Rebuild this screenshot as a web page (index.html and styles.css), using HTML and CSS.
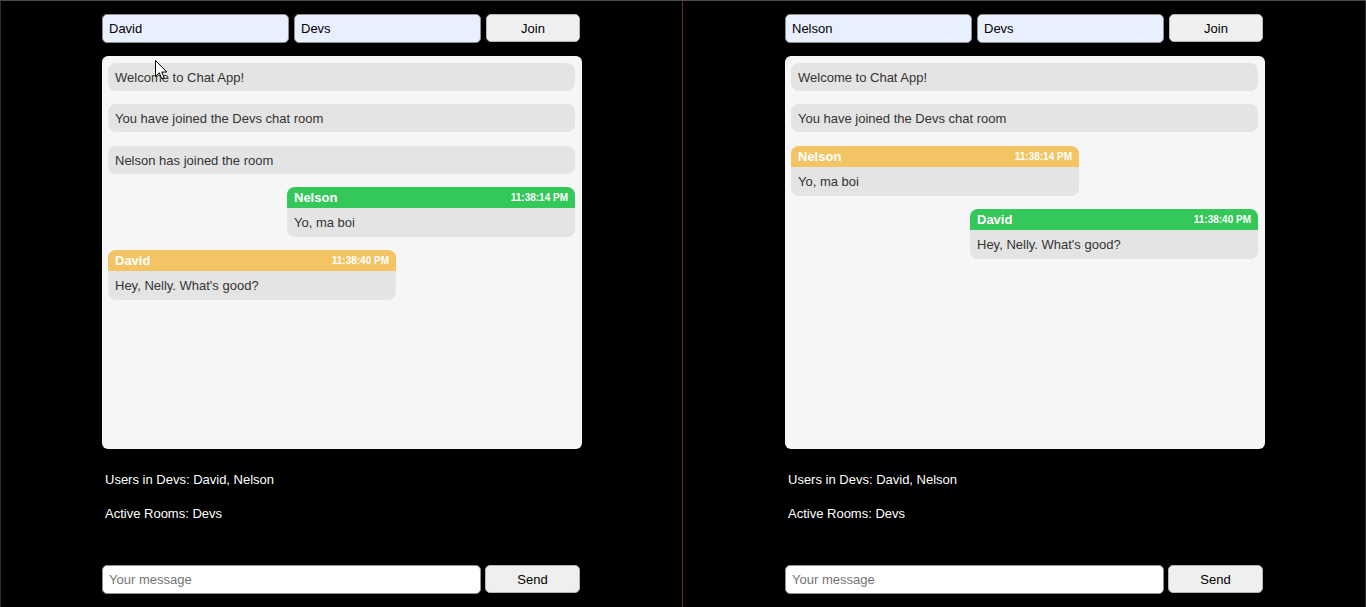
FILE: index.html
```html
<!DOCTYPE html>
<html lang="en">
<head>
<meta charset="utf-8">
<title>Chat App</title>
<link rel="stylesheet" href="styles.css">
</head>
<body>
<div class="screen">
  <section class="pane pane-left">
    <div class="app">
      <div class="join-row">
        <input class="field autofill" type="text" value="David">
        <input class="field autofill" type="text" value="Devs">
        <button class="btn">Join</button>
      </div>
      <div class="chat">
        <div class="sys">Welcome to Chat App!</div>
        <div class="sys">You have joined the Devs chat room</div>
        <div class="sys">Nelson has joined the room</div>
        <div class="msg own">
          <div class="msg-head green"><span class="name">Nelson</span><span class="time">11:38:14 PM</span></div>
          <div class="msg-body">Yo, ma boi</div>
        </div>
        <div class="msg">
          <div class="msg-head yellow"><span class="name">David</span><span class="time">11:38:40 PM</span></div>
          <div class="msg-body">Hey, Nelly. What's good?</div>
        </div>
      </div>
      <p class="info first">Users in Devs: David, Nelson</p>
      <p class="info">Active Rooms: Devs</p>
      <div class="send-row">
        <input class="field plain" type="text" placeholder="Your message">
        <button class="btn">Send</button>
      </div>
    </div>
    <svg class="cursor" width="13" height="20" viewBox="0 0 13 20"><path d="M0.5 0.5 L0.5 16.5 L4.3 12.8 L6.8 18.7 L9.2 17.7 L6.8 12 L11.8 12 Z" fill="#fff" stroke="#000" stroke-width="1" stroke-linejoin="miter"/></svg>
  </section>
  <div class="divider"></div>
  <section class="pane pane-right">
    <div class="app">
      <div class="join-row">
        <input class="field autofill" type="text" value="Nelson">
        <input class="field autofill" type="text" value="Devs">
        <button class="btn">Join</button>
      </div>
      <div class="chat">
        <div class="sys">Welcome to Chat App!</div>
        <div class="sys">You have joined the Devs chat room</div>
        <div class="msg">
          <div class="msg-head yellow"><span class="name">Nelson</span><span class="time">11:38:14 PM</span></div>
          <div class="msg-body">Yo, ma boi</div>
        </div>
        <div class="msg own">
          <div class="msg-head green"><span class="name">David</span><span class="time">11:38:40 PM</span></div>
          <div class="msg-body">Hey, Nelly. What's good?</div>
        </div>
      </div>
      <p class="info first">Users in Devs: David, Nelson</p>
      <p class="info">Active Rooms: Devs</p>
      <div class="send-row">
        <input class="field plain" type="text" placeholder="Your message">
        <button class="btn">Send</button>
      </div>
    </div>
  </section>
</div>
</body>
</html>
```
FILE: styles.css
```css
* { box-sizing: border-box; }
html, body {
  margin: 0;
  padding: 0;
  background: #000;
  font-family: "Liberation Sans", Arial, sans-serif;
  font-size: 13px;
  overflow: hidden;
}
.screen {
  display: flex;
  width: 1366px;
  height: 607px;
  border-top: 1px solid #4a4a4a;
}
.pane {
  position: relative;
  height: 606px;
  padding-top: 13px;
}
.pane-left {
  width: 682px;
  border-left: 1px solid #2e2e2e;
  padding-left: 101px;
}
.divider {
  width: 1px;
  height: 606px;
  background: #6d2a30;
}
.pane-right {
  width: 683px;
  border-right: 1px solid #2e2e2e;
  padding-left: 102px;
}
.app {
  width: 480px;
  display: flex;
  flex-direction: column;
}
.join-row {
  display: grid;
  grid-template-columns: 187px 187px 94px;
  column-gap: 5px;
  height: 29px;
}
.send-row {
  display: grid;
  grid-template-columns: 379px 95px;
  column-gap: 4px;
  height: 29px;
  margin-top: 43px;
}
.field {
  height: 29px;
  border: 1px solid #8f8f8f;
  border-radius: 5px;
  padding: 0 6px;
  font-family: "Liberation Sans", Arial, sans-serif;
  font-size: 13px;
  color: #000;
  outline: none;
}
.autofill { background: #e8f0fe; }
.plain { background: #fff; }
.plain::placeholder { color: #757575; }
.btn {
  height: 28px;
  border: 1px solid #b5b5b5;
  border-radius: 5px;
  background: #efefef;
  font-family: "Liberation Sans", Arial, sans-serif;
  font-size: 13px;
  color: #000;
  padding: 0;
}
.chat {
  margin-top: 13px;
  height: 393px;
  background: #f6f6f6;
  border-radius: 6px;
  padding: 7px 7px 7px 6px;
  display: flex;
  flex-direction: column;
  gap: 13.33px;
}
.sys {
  background: #e4e4e4;
  border-radius: 8px;
  height: 28px;
  padding: 1px 7px 0;
  line-height: 28px;
  color: #333;
}
.msg {
  width: 288px;
  border-radius: 8px;
  overflow: hidden;
  background: #e4e4e4;
}
.msg.own { margin-left: auto; }
.msg-head {
  height: 21px;
  padding: 0 7px;
  display: flex;
  justify-content: space-between;
  align-items: center;
  color: #fff;
}
.green { background: #34c759; }
.yellow { background: #f2c464; }
.name { font-weight: bold; font-size: 13px; }
.time { font-weight: bold; font-size: 10px; }
.msg-body {
  height: 29px;
  line-height: 29px;
  padding: 0 7px;
  color: #333;
}
.info {
  margin: 18px 0 0;
  padding-left: 3px;
  line-height: 16px;
  color: #fff;
}
.info.first { margin-top: 23px; }
.cursor {
  position: absolute;
  left: 154px;
  top: 59px;
}
```
